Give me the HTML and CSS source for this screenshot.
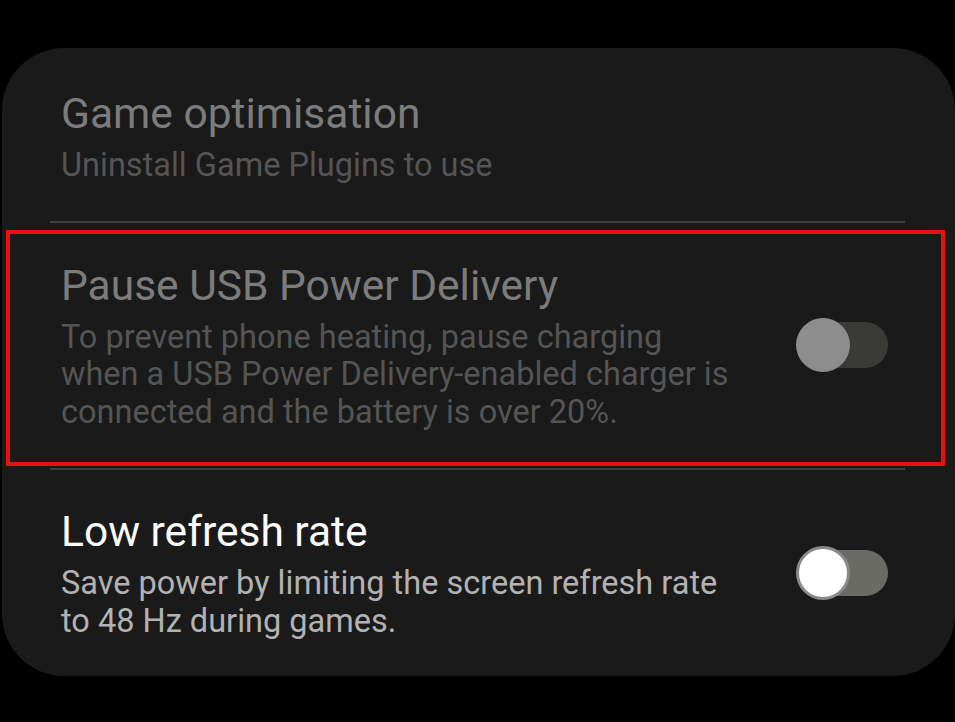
FILE: index.html
```html
<!DOCTYPE html>
<html>
<head>
<meta charset="utf-8">
<link rel="stylesheet" href="styles.css">
</head>
<body>
<div class="card">
  <div class="row row-first">
    <div class="text">
      <div class="title dim">Game optimisation</div>
      <div class="sub dimmer">Uninstall Game Plugins to use</div>
    </div>
  </div>
  <div class="divider"></div>
  <div class="row highlight">
    <div class="text">
      <div class="title dim">Pause USB Power Delivery</div>
      <div class="sub dimmer">To prevent phone heating, pause charging<br>when a USB Power Delivery-enabled charger is<br>connected and the battery is over 20%.</div>
    </div>
    <div class="toggle off"><span class="track"></span><span class="knob"></span></div>
  </div>
  <div class="divider"></div>
  <div class="row row-last">
    <div class="text">
      <div class="title">Low refresh rate</div>
      <div class="sub">Save power by limiting the screen refresh rate<br>to 48 Hz during games.</div>
    </div>
    <div class="toggle on"><span class="track"></span><span class="knob"></span></div>
  </div>
</div>
</body>
</html>
```
FILE: styles.css
```css
html, body {
  margin: 0;
  padding: 0;
  background: #000;
  font-family: Roboto, "Liberation Sans", sans-serif;
}
body {
  width: 955px;
  height: 722px;
  overflow: hidden;
}
.card {
  margin: 48px 0 0 2px;
  width: 953px;
  height: 628px;
  box-sizing: border-box;
  padding: 0 50px 0 48px;
  background: #1a1a1a;
  border-radius: 62px;
}
.row {
  display: flex;
  align-items: center;
  justify-content: space-between;
}
.row-first {
  padding: 40px 17px 36px 11px;
}
.row-last {
  padding: 36px 17px 0 11px;
}
.highlight {
  margin: 7px -40px 2px -44px;
  border: 4px solid #e8100f;
  padding: 26px 53px 31px 51px;
}
.text {
  display: flex;
  flex-direction: column;
}
.title {
  font-size: 42.5px;
  line-height: 52px;
  color: #fbfbfb;
  white-space: nowrap;
}
.sub {
  margin-top: 7px;
  font-size: 32.5px;
  line-height: 37.5px;
  color: #b2b2b2;
  white-space: nowrap;
}
.dim { color: #7c7c7c; }
.dimmer { color: #555555; }
.divider {
  height: 2px;
  background: #3e3e3e;
}
.toggle {
  position: relative;
  width: 92px;
  height: 54px;
  flex: none;
}
.track {
  position: absolute;
  left: 6px;
  right: 0;
  top: 4px;
  height: 46px;
  border-radius: 23px;
}
.knob {
  position: absolute;
  left: 0;
  top: 0;
  width: 54px;
  height: 54px;
  box-sizing: border-box;
  border-radius: 50%;
}
.off .track { background: #3a3a36; }
.off .knob { background: #8d8d8d; }
.on .track { background: #6b6b65; }
.on .knob { background: #ffffff; border: 3px solid #8a8a8a; }
```
